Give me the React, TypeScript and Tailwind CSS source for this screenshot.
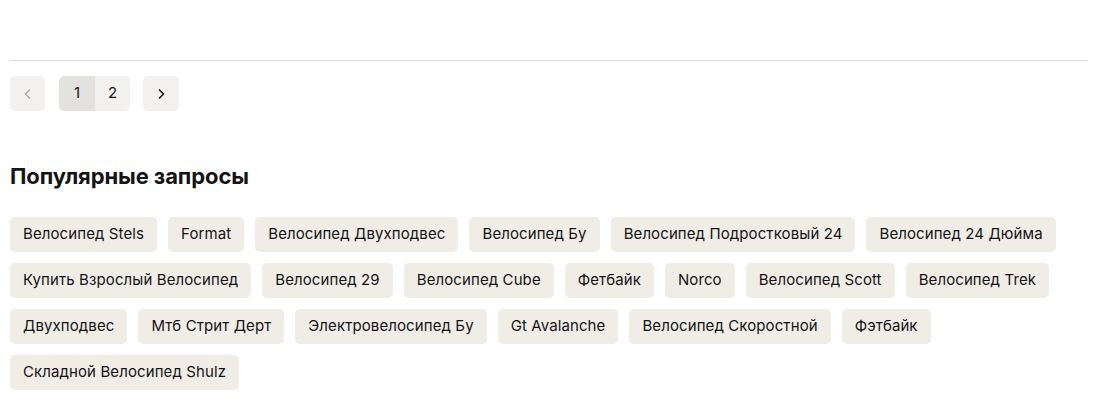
import React from "react";

const rows = [
  ["Велосипед Stels", "Format", "Велосипед Двухподвес", "Велосипед Бу", "Велосипед Подростковый 24", "Велосипед 24 Дюйма"],
  ["Купить Взрослый Велосипед", "Велосипед 29", "Велосипед Cube", "Фетбайк", "Norco", "Велосипед Scott", "Велосипед Trek"],
  ["Двухподвес", "Мтб Стрит Дерт", "Электровелосипед Бу", "Gt Avalanche", "Велосипед Скоростной", "Фэтбайк"],
  ["Складной Велосипед Shulz"],
];

export default function App() {
  return (
    <div className="w-[1095px] h-[418px] bg-white text-[#141414] px-[10px] pt-[60px]" style={{ fontFamily: "Inter, 'Noto Sans', sans-serif" }}>
      <div className="w-[1078px] h-px bg-[#dddddd]" />
      <div className="flex items-center mt-[15px] h-[35px]">
        <button className="w-[35px] h-[35px] rounded-[5px] bg-[#f2f1ef] flex items-center justify-center">
          <svg width="14" height="14" viewBox="0 0 14 14" fill="none"><path d="M9 2.5 4.5 7 9 11.5" stroke="#a8a8a8" strokeWidth="1.3" /></svg>
        </button>
        <div className="ml-[14px] flex h-[35px] rounded-[5px] overflow-hidden">
          <div className="w-[36px] bg-[#e4e2df] flex items-center justify-center text-[15px]">1</div>
          <div className="w-[35px] bg-[#f2f1ef] flex items-center justify-center text-[15px]">2</div>
        </div>
        <button className="ml-[13px] w-[36px] h-[35px] rounded-[5px] bg-[#f2f1ef] flex items-center justify-center">
          <svg width="14" height="14" viewBox="0 0 14 14" fill="none"><path d="M5 2.5 9.5 7 5 11.5" stroke="#141414" strokeWidth="1.5" /></svg>
        </button>
      </div>
      <h2 className="mt-[50px] text-[22px] font-bold leading-[30px] tracking-[-0.1px]">Популярные запросы</h2>
      <div className="mt-[26px] flex flex-col gap-[11px]">
        {rows.map((r, i) => (
          <div key={i} className="flex gap-[11px]">
            {r.map((t) => (
              <span key={t} className="h-[35px] px-[13px] rounded-[5px] bg-[#f0ede7] flex items-center text-[15px] tracking-[0.1px] whitespace-nowrap">{t}</span>
            ))}
          </div>
        ))}
      </div>
    </div>
  );
}
